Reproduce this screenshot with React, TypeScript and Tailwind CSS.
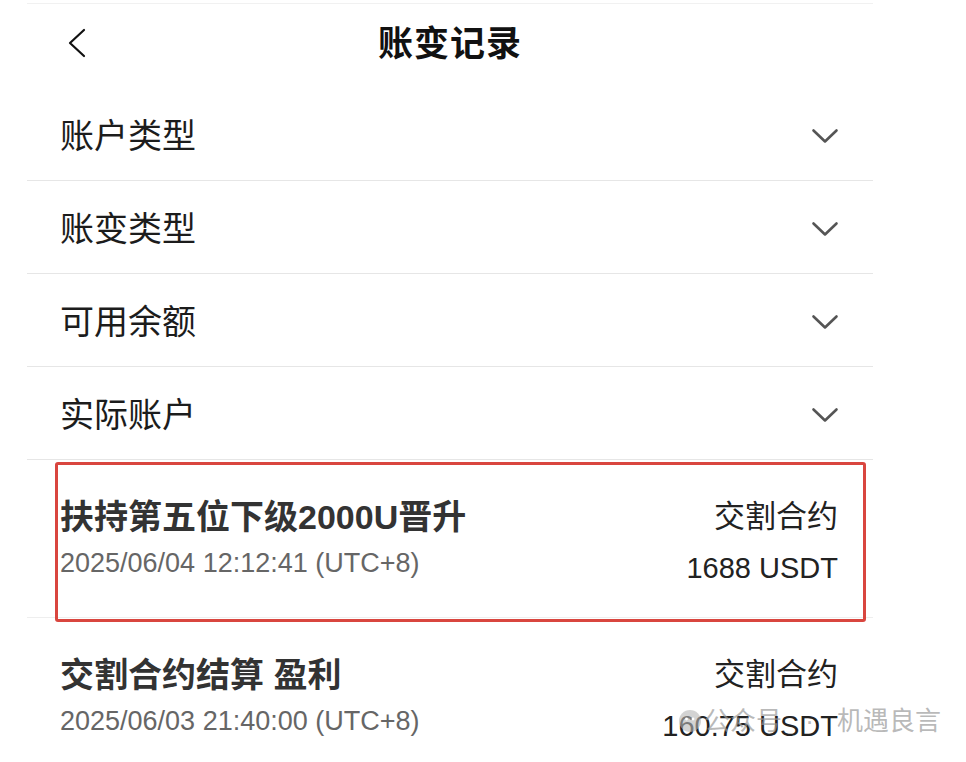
import React from 'react';

const FONT = '"Liberation Sans", "Noto Sans CJK SC", sans-serif';

interface Txn {
  title: string;
  time: string;
  product: string;
  amount: string;
  highlight?: boolean;
}

const filters = ['账户类型', '账变类型', '可用余额', '实际账户'];

const txns: Txn[] = [
  {
    title: '扶持第五位下级2000U晋升',
    time: '2025/06/04 12:12:41 (UTC+8)',
    product: '交割合约',
    amount: '1688 USDT',
    highlight: true,
  },
  {
    title: '交割合约结算 盈利',
    time: '2025/06/03 21:40:00 (UTC+8)',
    product: '交割合约',
    amount: '160.75 USDT',
  },
];

function ChevronDown() {
  return (
    <svg width="28" height="16" viewBox="0 0 28 16" fill="none">
      <path d="M2.5 2.5 L14 13.5 L25.5 2.5" stroke="#555" strokeWidth="2.6" strokeLinecap="round" strokeLinejoin="round" />
    </svg>
  );
}

function ChevronLeft() {
  return (
    <svg width="20" height="30" viewBox="0 0 20 30" fill="none">
      <path d="M17 2 L3 15 L17 28" stroke="#111" strokeWidth="2.2" strokeLinecap="round" strokeLinejoin="round" />
    </svg>
  );
}

export default function App() {
  return (
    <div className="relative w-[966px] h-[762px] overflow-hidden bg-white" style={{ fontFamily: FONT }}>
      <div className="ml-[27px] w-[846px] border-t border-[#f1f1f1] mt-[3px]">
        {/* header */}
        <div className="grid grid-cols-[1fr_auto_1fr] items-center h-[84px] pb-[6px]">
          <div className="pl-[40px] flex items-center">
            <ChevronLeft />
          </div>
          <h1 className="text-[35px] font-bold text-[#111] leading-none tracking-[1px]">账变记录</h1>
          <div />
        </div>

        {/* filters */}
        {filters.map((f) => (
          <div
            key={f}
            className="flex items-center justify-between h-[93px] pt-[4px] pl-[33px] pr-[34px] border-b border-[#e6e6e6]"
          >
            <span className="text-[34px] text-[#1c1c1c] leading-none">{f}</span>
            <ChevronDown />
          </div>
        ))}

        {/* records */}
        {txns.map((t) => (
          <div
            key={t.time}
            className="relative flex justify-between h-[158px] pt-[40px] pl-[33px] pr-[35px] border-b border-[#eeeeee]"
          >
            <div className="flex flex-col">
              <span className="text-[34px] font-bold text-[#333] leading-[34px]">{t.title}</span>
              <span className="mt-[14px] text-[27px] text-[#666] leading-[30px]">{t.time}</span>
            </div>
            <div className="flex flex-col items-end">
              <span className="text-[31px] text-[#222] leading-[34px]">{t.product}</span>
              <span className="mt-[19px] text-[29px] text-[#222] leading-[30px]">{t.amount}</span>
            </div>
            {t.highlight && (
              <div className="absolute left-[28px] right-[7px] top-[2px] bottom-[-5px] border-[3px] border-[#d9463f] rounded-[3px]" />
            )}
          </div>
        ))}
      </div>

      {/* watermark */}
      <div className="absolute left-[678px] top-[708px] flex items-center text-[26px] text-[#9a9a9a]/70 leading-none">
        <svg width="24" height="24" viewBox="0 0 24 24" className="mr-[2px]">
          <circle cx="12" cy="12" r="11" fill="#b5b5b5" fillOpacity="0.6" />
          <circle cx="8.5" cy="10" r="1.4" fill="#fff" />
          <circle cx="15" cy="10" r="1.4" fill="#fff" />
        </svg>
        <span>公众号</span>
        <span className="w-[55px] text-center">·</span>
        <span>机遇良言</span>
      </div>
    </div>
  );
}
